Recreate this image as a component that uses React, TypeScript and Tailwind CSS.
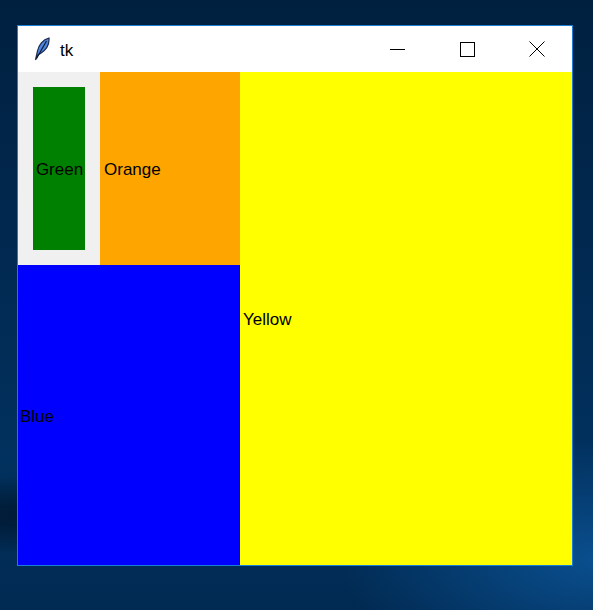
export default function App() {
  return (
    <div
      className="w-[593px] h-[610px] overflow-hidden pt-[25px] pl-[17px]"
      style={{
        background:
          'radial-gradient(ellipse 260px 120px at 600px 560px, #0a4f8f 0%, rgba(10,79,143,0) 100%), radial-gradient(ellipse 400px 40px at 120px 515px, #00152b 0%, rgba(0,21,43,0) 100%), linear-gradient(180deg, #00203f 0%, #012a52 45%, #01315e 75%, #012a52 100%)',
        fontFamily: '"Liberation Sans", Arial, sans-serif',
      }}
    >
      <div className="w-[556px] border border-[#1a7fd4] bg-white flex flex-col">
        {/* title bar */}
        <div className="h-[46px] flex items-center bg-white">
          <div className="w-[16px] ml-[16px] flex items-center">
            <svg width="16" height="24" viewBox="0 0 16 24">
              <path d="M1.5 23 L3.5 14 C4.5 8 9 2.5 15 1 C15.5 7 12 13 6.5 16.5 L4.5 17.5 Z" fill="#4f86df" stroke="#1b2a4a" strokeWidth="1.2" />
              <path d="M2.5 21.5 L12.5 4" stroke="#0d1a33" strokeWidth="1.2" />
            </svg>
          </div>
          <span className="ml-[10px] text-[17px] text-black leading-none pt-[2px]">tk</span>
          <div className="ml-auto flex items-center h-full">
            <div className="w-[70px] h-full flex items-center justify-center">
              <div className="w-[15px] h-px bg-black mt-[1px]" />
            </div>
            <div className="w-[70px] h-full flex items-center justify-center">
              <div className="w-[15px] h-[15px] border border-black" />
            </div>
            <div className="w-[70px] h-full flex items-center justify-center">
              <svg width="16" height="16" viewBox="0 0 16 16">
                <path d="M0.5 0.5 L15.5 15.5 M15.5 0.5 L0.5 15.5" stroke="#000" strokeWidth="1" />
              </svg>
            </div>
          </div>
        </div>

        {/* content */}
        <div className="h-[493px] flex text-[17px] text-black">
          <div className="w-[222px] flex flex-col">
            <div className="h-[193px] flex">
              <div className="w-[82px] bg-[#f0f0f0] p-[15px]">
                <div className="h-full bg-[#008000] flex items-center justify-center pt-[3px] pl-[1px]">Green</div>
              </div>
              <div className="w-[140px] bg-[#ffa500] flex items-center pl-[4px] pt-[3px]">Orange</div>
            </div>
            <div className="flex-1 bg-[#0000ff] flex items-center pl-[2px] pt-[3px]">Blue</div>
          </div>
          <div className="flex-1 bg-[#ffff00] flex items-center pl-[3px] pt-[3px]">Yellow</div>
        </div>
      </div>
    </div>
  )
}
